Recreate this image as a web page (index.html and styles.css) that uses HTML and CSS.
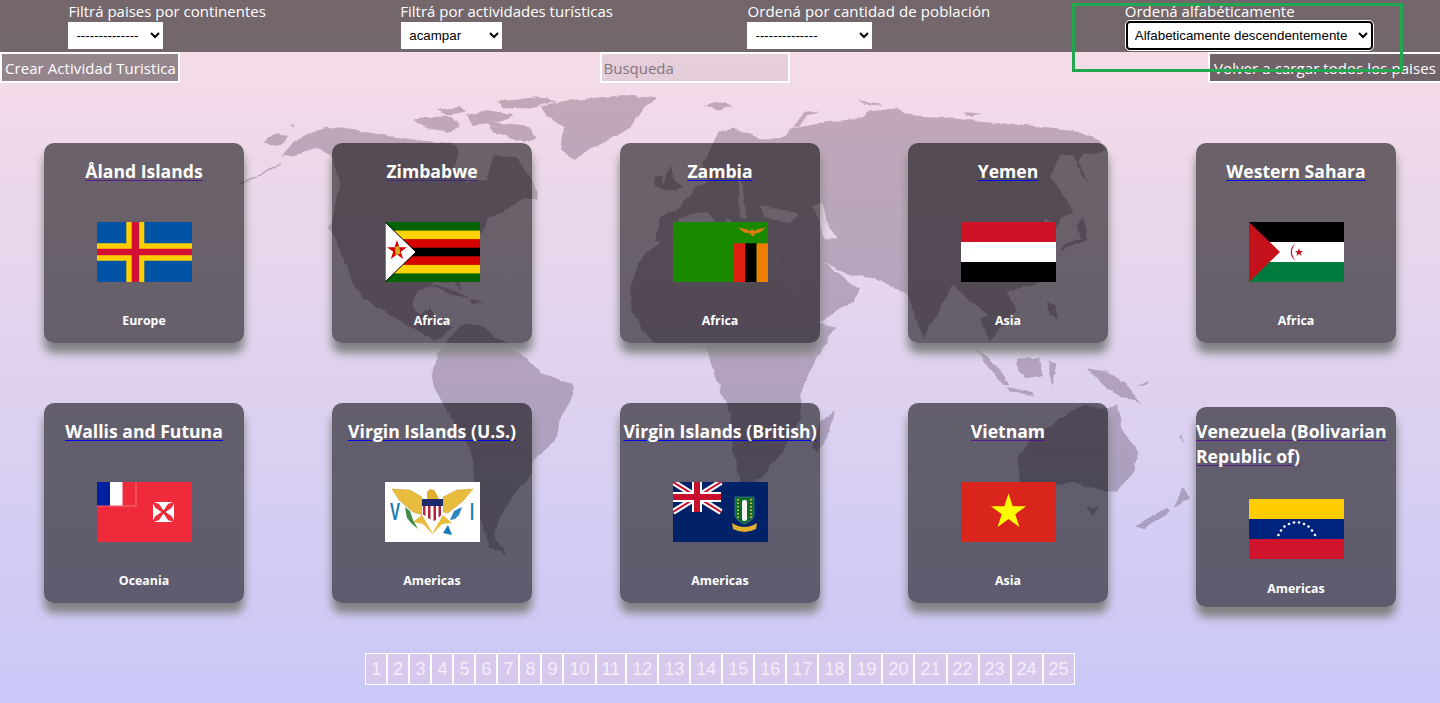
FILE: index.html
```html
<!DOCTYPE html>
<html lang="es">
<head>
<meta charset="utf-8">
<title>Países</title>
<link rel="stylesheet" href="styles.css">
</head>
<body>
<svg class="map" viewBox="0 0 1440 703" aria-hidden="true">
  <defs>
    <filter id="coast" x="0" y="0" width="100%" height="100%">
      <feTurbulence type="fractalNoise" baseFrequency=".09" numOctaves="3" seed="4"/>
      <feDisplacementMap in="SourceGraphic" scale="5" xChannelSelector="R" yChannelSelector="G"/>
      <feGaussianBlur stdDeviation=".35"/>
    </filter>
  </defs>
  <g filter="url(#coast)">
  <g transform="translate(240 85) scale(.33333)">
    <path d="M0 295L70 262L130 232L125 238L70 268L5 298Z"/>
    <path d="M72 170L110 145L145 150L130 175L95 185Z"/>
    <path d="M150 122L165 120L160 127Z"/>
    <path d="M125 215L160 170L200 150L260 125L340 135L430 150L530 165L640 175L660 200L640 250L680 290L740 285L760 210L830 220L880 290L895 345L850 340L790 380L740 400L730 440L700 470L690 500L650 570L665 620L640 590L590 590L530 620L520 660L540 690L570 670L590 710L640 725L605 760L580 770L540 740L450 690L370 640L340 600L320 540L300 500L270 430L300 310L280 220L230 190L190 205Z"/>
    <path d="M520 100L580 95L640 95L660 130L620 140L560 130Z"/>
    <path d="M590 75L660 65L680 80L620 90Z"/>
    <path d="M680 90L740 75L820 90L780 110L700 120Z"/>
    <path d="M770 50L900 35L950 50L860 70L790 70Z"/>
    <path d="M740 110L850 120L895 160L850 170L760 140Z"/>
    <path d="M900 65L1000 45L1150 30L1250 40L1200 80L1170 130L1060 190L1000 225L960 190L970 130L920 90Z"/>
    <path d="M1390 60L1430 50L1475 60L1440 75Z"/>
    <path d="M560 600L620 605L690 640L640 630Z"/>
    <path d="M690 640L730 650L690 655Z"/>
    <path d="M660 720L720 720L790 770L860 820L900 860L1000 900L1003 930L960 1000L950 1060L880 1130L870 1170L820 1230L780 1300L760 1350L800 1410L750 1390L720 1300L700 1150L690 1090L620 980L580 900L575 870L590 810Z"/>
    <path d="M1245 300L1270 290L1290 240L1310 290L1330 310L1280 320Z"/>
    <path d="M1245 275L1265 270L1262 300L1243 305Z"/>
    <path d="M1270 465L1350 440L1470 445L1600 470L1610 530L1725 710L1785 725L1700 880L1685 920L1680 1000L1630 1100L1570 1170L1530 1200L1500 1190L1480 1100L1470 990L1420 860L1400 790L1230 770L1175 680L1170 610L1200 520Z"/>
    <path d="M1485 130L1435 140L1420 180L1390 230L1400 290L1360 310L1320 370L1260 395L1245 470L1300 460L1320 400L1400 380L1440 430L1460 400L1500 430Z"/>
  </g>
  <g transform="translate(740 85) scale(.33333)">
    <path fill-rule="evenodd" d="M-20 130L60 160L120 160L160 130L270 110L370 100L380 80L470 70L530 95L640 100L720 110L860 120L1000 135L1080 170L1100 200L1030 210L1010 240L1040 290L1000 210L960 210L930 280L960 310L1000 380L960 400L950 430L920 400L890 440L930 500L910 590L800 620L830 680L780 730L750 770L720 700L745 690L680 640L640 600L550 760L500 620L460 610L400 580L330 570L250 530L330 590L360 610L340 650L240 710L225 710L110 530L85 480L20 470L-40 470L-20 420L0 400L20 400L0 250L-60 250L-20 220L-30 150ZM60 360L175 385L150 415L70 400ZM215 360L250 350L265 420L290 460L250 460L235 400Z"/>
    <path d="M160 125L190 85L240 75L195 95L178 125Z"/>
    <path d="M350 45L410 55L430 65L370 55Z"/>
    <path d="M670 82L720 85L690 95Z"/>
    <path d="M260 120L290 105L330 160L300 135Z"/>
    <path d="M960 500L1000 480L1040 460L1030 400L1010 420L1020 460L970 480Z"/>
    <path d="M1010 215L1030 260L1040 290L1020 265Z"/>
    <path d="M920 650L945 660L955 700L930 690Z"/>
    <path d="M710 790L760 830L810 900L790 900L730 830Z"/>
    <path d="M830 820L900 820L910 870L860 880L835 860Z"/>
    <path d="M925 830L950 835L935 900L925 870Z"/>
    <path d="M800 905L880 925L880 935L810 920Z"/>
    <path d="M1040 850L1100 860L1150 890L1200 950L1130 930L1090 900Z"/>
    <path d="M1030 960L1090 975L1130 960L1150 1040L1195 1100L1180 1160L1130 1220L1050 1210L1000 1190L900 1210L840 1220L835 1110L880 1060L960 1000Z"/>
    <path d="M1040 1270L1080 1265L1060 1290Z"/>
    <path d="M1190 1320L1280 1270L1290 1280L1210 1330Z"/>
    <path d="M1300 1270L1330 1210L1350 1240Z"/>
    <path d="M285 975L260 1060L235 1105L215 1085L240 1010Z"/>
    <path d="M1190 900L1230 885L1220 900Z"/>
    <path d="M1315 1060L1330 1075L1320 1050Z"/>
  </g>
  </g>
</svg>

<header class="filters">
  <div class="filter">
    <label class="filter__label">Filtrá paises por continentes</label>
    <select class="filter__select filter__select--continents"><option>--------------</option></select>
  </div>
  <div class="filter">
    <label class="filter__label">Filtrá por actividades turísticas</label>
    <select class="filter__select filter__select--activities"><option>acampar</option></select>
  </div>
  <div class="filter">
    <label class="filter__label filter__label--population">Ordená por cantidad de población</label>
    <select class="filter__select filter__select--population"><option>--------------</option></select>
  </div>
  <div class="filter">
    <label class="filter__label">Ordená alfabéticamente</label>
    <select class="filter__select filter__select--alpha"><option>Alfabeticamente descendentemente</option></select>
  </div>
</header>

<div class="actions">
  <button class="action action--create">Crear Actividad Turistica</button>
  <input class="search" placeholder="Busqueda">
  <button class="action action--reload">Volver a cargar todos los paises</button>
</div>

<div class="highlight"></div>

<main class="cards">
  <article class="card">
    <a class="card__title card__title--visited" href="#">Åland Islands</a>
    <svg class="flag" viewBox="0 0 95 60" preserveAspectRatio="none">
      <rect width="95" height="60" fill="#0053a5"/>
      <path d="M29.3 0h18v21.3H95v17.4H47.3V60h-18V38.7H0V21.3h29.3z" fill="#ffce00"/>
      <path d="M34.7 0H42v26.7h53v6.6H42V60h-7.3V33.3H0v-6.6h34.7z" fill="#d21034"/>
    </svg>
    <p class="card__region">Europe</p>
  </article>
  <article class="card">
    <a class="card__title" href="#">Zimbabwe</a>
    <svg class="flag" viewBox="0 0 95 60" preserveAspectRatio="none">
      <rect width="95" height="60" fill="#006400"/>
      <rect y="8.6" width="95" height="42.8" fill="#ffd200"/>
      <rect y="17.1" width="95" height="25.8" fill="#d40000"/>
      <rect y="25.7" width="95" height="8.6" fill="#000"/>
      <path d="M0 0L31 30L0 60Z" fill="#fff" stroke="#000" stroke-width="1"/>
      <path d="M12 18L14.4 25.200L22 25.200L15.800 29.700L18.200 37L12 32.500L5.800 37L8.200 29.700L2 25.200L9.600 25.200Z" fill="#d40000"/>
      <path d="M10 25L14 24L15.500 32L10.500 33Z" fill="#d8ac1f"/>
    </svg>
    <p class="card__region">Africa</p>
  </article>
  <article class="card">
    <a class="card__title card__title--blue" href="#">Zambia</a>
    <svg class="flag" viewBox="0 0 95 60" preserveAspectRatio="none">
      <rect width="95" height="60" fill="#198a00"/>
      <rect x="61" y="21.3" width="11.3" height="38.7" fill="#de2010"/>
      <rect x="72.3" y="21.3" width="11.3" height="38.7" fill="#000"/>
      <rect x="83.6" y="21.3" width="11.4" height="38.7" fill="#ef7d00"/>
      <path d="M65 5.500L73 7L77 9L79 7L82 9L85 7L93 5.500L87 10.500L82 11.500L80 15L77 11.500L71 10.500Z" fill="#d97a10"/>
    </svg>
    <p class="card__region">Africa</p>
  </article>
  <article class="card">
    <a class="card__title card__title--blue" href="#">Yemen</a>
    <svg class="flag" viewBox="0 0 95 60" preserveAspectRatio="none">
      <rect width="95" height="60" fill="#fff"/>
      <rect width="95" height="20" fill="#ce1126"/>
      <rect y="40" width="95" height="20" fill="#000"/>
    </svg>
    <p class="card__region">Asia</p>
  </article>
  <article class="card">
    <a class="card__title card__title--blue" href="#">Western Sahara</a>
    <svg class="flag" viewBox="0 0 95 60" preserveAspectRatio="none">
      <rect width="95" height="60" fill="#fff"/>
      <rect width="95" height="20" fill="#000"/>
      <rect y="40" width="95" height="20" fill="#007a3d"/>
      <path d="M0 0L31 30L0 60Z" fill="#c4111b"/>
      <path d="M47 21.500A9.500 9.500 0 0 0 47 38.500A11 11 0 0 1 47 21.500Z" fill="#c4111b"/>
      <path d="M50 26L51 29L54 29L51.600 30.900L52.500 34L50 32.100L47.500 34L48.400 30.900L46 29L49 29Z" fill="#c4111b"/>
    </svg>
    <p class="card__region">Africa</p>
  </article>

  <article class="card">
    <a class="card__title card__title--blue" href="#">Wallis and Futuna</a>
    <svg class="flag" viewBox="0 0 95 60" preserveAspectRatio="none">
      <rect width="95" height="60" fill="#ef2b3b"/>
      <rect x=".5" y="-1" width="38.500" height="25" fill="none" stroke="#f7707c" stroke-width="1"/>
      <rect width="13" height="23.500" fill="#00209f"/>
      <rect x="13" width="12.500" height="23.500" fill="#fff"/>
      <path d="M57 20H76L71 22L66.500 28.500L62 22ZM57 40H76L71 38L66.500 31.500L62 38ZM56 21L58 25.500L64.500 30L58 34.500L56 39ZM77 21L75 25.500L68.500 30L75 34.500L77 39Z" fill="#fff"/>
    </svg>
    <p class="card__region">Oceania</p>
  </article>
  <article class="card">
    <a class="card__title card__title--blue" href="#">Virgin Islands (U.S.)</a>
    <svg class="flag" viewBox="0 0 95 60" preserveAspectRatio="none">
      <rect width="95" height="60" fill="#fff"/>
      <path d="M7 7L25 8L37 15L37 33L28 30L14 18Z" fill="#e8bd3e" stroke="#b8912a" stroke-width=".4"/>
      <path d="M88 7L72 8L58 15L58 30L63 31L78 19Z" fill="#e8bd3e" stroke="#b8912a" stroke-width=".4"/>
      <path d="M42 17L42 10L45 7L49 8L52 13L54 17Z" fill="#e0ad2b"/>
      <path d="M28 40L37 33L47.500 51L58 33L67 41L57 42L47.500 52L38 42Z" fill="#e8bd3e"/>
      <path d="M37 17H58V24H37Z" fill="#1d2a6b"/>
      <path d="M37 24H58V33L47.500 40L37 33Z" fill="#fff"/>
      <path d="M38 24H40.500V34L38 32.500ZM43 24H45.500V37.500L43 36ZM48.500 24H51V38L48.500 39ZM53.500 24H56V33.500L53.500 35.500Z" fill="#b2223a"/>
      <path d="M20 25L25 29L28 38L33 47L27 42L22 36Z" fill="#3e8c46"/>
      <path d="M65 38L69 29L77 25L74 33L70 37Z" fill="#2c86bf"/>
      <path d="M63 43L67 53L58 51Z" fill="#1279b8"/>
      <text class="flag__letter" x="5" y="38" textLength="10" lengthAdjust="spacingAndGlyphs">V</text>
      <text class="flag__letter" x="85" y="38" textLength="4" lengthAdjust="spacingAndGlyphs">I</text>
    </svg>
    <p class="card__region">Americas</p>
  </article>
  <article class="card">
    <a class="card__title card__title--blue" href="#">Virgin Islands (British)</a>
    <svg class="flag" viewBox="0 0 95 60" preserveAspectRatio="none">
      <rect width="95" height="60" fill="#012169"/>
      <path d="M0 0L48 30M48 0L0 30" stroke="#fff" stroke-width="6"/>
      <path d="M0 0L48 30M48 0L0 30" stroke="#c8102e" stroke-width="2"/>
      <path d="M24 0V30M0 15H48" stroke="#fff" stroke-width="10"/>
      <path d="M24 0V30M0 15H48" stroke="#c8102e" stroke-width="6"/>
      <path d="M62 15H81V33Q81 38 71.500 42Q62 38 62 33Z" fill="#0e6b2e" stroke="#3f7d8c" stroke-width=".8"/>
      <path d="M65 17V36M78 17V36" stroke="#d9b53a" stroke-width="2" stroke-dasharray="1.500 2"/>
      <rect x="69" y="18" width="5" height="21" rx="2" fill="#f4f4f4"/>
      <path d="M59 41Q65 45 71.500 45Q78 45 84 41L83 47Q77 50 71.500 50Q66 50 60 47Z" fill="#e3b12c"/>
    </svg>
    <p class="card__region">Americas</p>
  </article>
  <article class="card">
    <a class="card__title card__title--visited" href="#">Vietnam</a>
    <svg class="flag" viewBox="0 0 95 60" preserveAspectRatio="none">
      <rect width="95" height="60" fill="#da251d"/>
      <path d="M47.500 11.500L51.660 24.280L65.100 24.300L54.220 32.180L58.400 45L47.500 37.070L36.600 45L40.780 32.180L29.900 24.300L43.340 24.280Z" fill="#ff0"/>
    </svg>
    <p class="card__region">Asia</p>
  </article>
  <article class="card card--shifted">
    <a class="card__title card__title--visited" href="#">Venezuela (Bolivarian Republic of)</a>
    <svg class="flag" viewBox="0 0 95 60" preserveAspectRatio="none">
      <rect width="95" height="60" fill="#00247d"/>
      <rect width="95" height="20" fill="#fc0"/>
      <rect y="40" width="95" height="20" fill="#cf142b"/>
      <g fill="#fff">
        <circle cx="29.500" cy="36" r="1.300"/><circle cx="32" cy="31.500" r="1.300"/><circle cx="35.500" cy="27.500" r="1.300"/><circle cx="40" cy="25" r="1.300"/><circle cx="45" cy="23.500" r="1.300"/><circle cx="50" cy="23.500" r="1.300"/><circle cx="55" cy="25" r="1.300"/><circle cx="59.500" cy="27.500" r="1.300"/><circle cx="63" cy="31.500" r="1.300"/><circle cx="66" cy="36" r="1.300"/>
      </g>
    </svg>
    <p class="card__region">Americas</p>
  </article>
</main>

<nav class="pages">
  <button class="page">1</button><button class="page">2</button><button class="page">3</button><button class="page">4</button><button class="page">5</button><button class="page">6</button><button class="page">7</button><button class="page">8</button><button class="page">9</button><button class="page">10</button><button class="page">11</button><button class="page">12</button><button class="page">13</button><button class="page">14</button><button class="page">15</button><button class="page">16</button><button class="page">17</button><button class="page">18</button><button class="page">19</button><button class="page">20</button><button class="page">21</button><button class="page">22</button><button class="page">23</button><button class="page">24</button><button class="page">25</button>
</nav>
</body>
</html>
```

FILE: styles.css
```css
* { box-sizing: border-box; }

html, body { height: 100%; }

body {
  margin: 0;
  position: relative;
  overflow: hidden;
  font-family: "Open Sans", "Noto Sans", sans-serif;
  background: linear-gradient(180deg, #f8dde6 0%, #c9c8f7 100%);
}

.map {
  position: absolute;
  inset: 0;
  width: 1440px;
  height: 703px;
  fill: rgb(40, 15, 40);
  opacity: .24;
}

.filters {
  position: relative;
  display: flex;
  justify-content: space-around;
  height: 52px;
  padding-left: 1.2px;
  background: rgba(0, 0, 0, .535);
}

.filter { display: flex; flex-direction: column; align-items: flex-start; }

.filter__label {
  height: 22px;
  padding-top: 1px;
  font-size: 15px;
  line-height: 21px;
  color: #fff;
  white-space: nowrap;
}

.filter__label--population { letter-spacing: .1px; }

.filter__select {
  height: 27px;
  border: 0;
  border-radius: 0;
  background: #fff;
  color: #000;
  font-family: "Liberation Sans", sans-serif;
  font-size: 13.33px;
  padding-left: 4px;
}

.filter__select--continents { width: 95px; }
.filter__select--activities { width: 101px; margin-left: 1px; }
.filter__select--population { width: 125px; }
.filter__select--alpha {
  width: 247px;
  height: 29px;
  margin: -1px 0 0 1px;
  border: 2px solid #000;
  border-radius: 4px;
  outline: 1px solid #fff;
  padding-left: 3px;
}

.actions {
  position: relative;
  display: flex;
  justify-content: space-between;
  height: 31px;
}

.action {
  height: 31px;
  padding: 0 3px;
  border: 2px solid #fff;
  color: #fff;
  font-family: "Open Sans", "Noto Sans", sans-serif;
  font-size: 15px;
  letter-spacing: .07px;
  white-space: nowrap;
}

.action--create { width: 180px; background: rgba(0, 0, 0, .39); }
.action--reload { width: 232px; background: rgba(0, 0, 0, .54); border-right: 0; }

.search {
  width: 190px;
  height: 31px;
  margin-left: 1px;
  padding: 0 2px;
  border: 2px solid #fff;
  background: rgba(0, 0, 0, .06);
  font-family: "Open Sans", "Noto Sans", sans-serif;
  font-size: 15px;
  outline: 0;
}

.search::placeholder { color: #83757f; opacity: 1; }

.highlight {
  position: absolute;
  left: 1072px;
  top: 3px;
  width: 331px;
  height: 69px;
  border: 3px solid #21a74f;
}

.cards {
  position: relative;
  display: grid;
  grid-template-columns: repeat(5, 1fr);
  grid-auto-rows: 200px;
  row-gap: 60px;
  justify-items: center;
  margin-top: 60px;
}

.card {
  width: 200px;
  height: 200px;
  display: flex;
  flex-direction: column;
  align-items: center;
  justify-content: space-around;
  border-radius: 10px;
  background: rgba(0, 0, 0, .55);
  box-shadow: 0 10px 10px #808080;
  color: #fff;
}

.card--shifted { margin-top: 4px; padding-top: 1px; }

.card__title {
  margin: 1.5px 0 10px;
  font-size: 17.6px;
  font-weight: 700;
  line-height: 25px;
  color: #fff;
  text-decoration: underline 1px;
  text-underline-offset: 2px;
  text-decoration-color: #3b2a86;
}

.card__title--blue { text-decoration-color: #0000ee; }
.card__title--visited { text-decoration-color: #551a8b; }

.flag { display: block; width: 95px; height: 60px; flex: none; }

.flag__letter {
  font-family: "Liberation Sans", sans-serif;
  font-size: 23px;
  font-weight: 700;
  fill: #1a7ab5;
}

.card__region {
  margin: 2px 0 0;
  font-size: 12.4px;
  font-weight: 700;
  line-height: 17px;
}

.pages {
  position: relative;
  display: flex;
  justify-content: center;
  margin-top: 50px;
}

.page {
  height: 32px;
  padding: 0 5px;
  border: 1px solid #fff;
  border-radius: 0;
  background: rgba(245, 200, 215, .3);
  color: #f4eef8;
  font-family: "Liberation Sans", sans-serif;
  font-size: 18px;
}
```
